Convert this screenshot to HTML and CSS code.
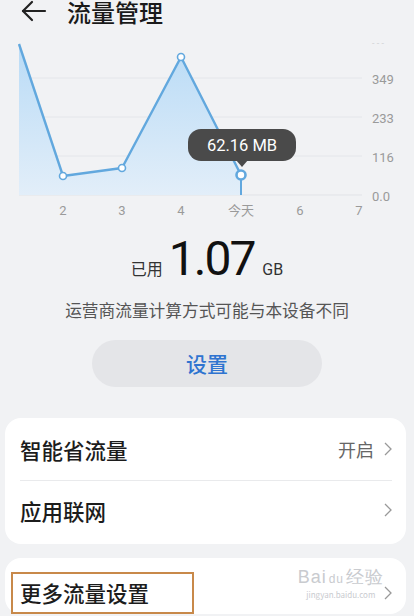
FILE: index.html
```html
<!DOCTYPE html>
<html>
<head>
    <meta charset="utf-8">
    <title>流量管理</title>
    <link rel="stylesheet" href="styles.css">
</head>
<body>
    <div class="page">
        <div class="header">
            <svg class="backIcon" width="26" height="22" viewBox="0 0 26 22">
                <polyline points="11,2 2,11 11,20" fill="none" stroke="#222" stroke-width="2.2" stroke-linecap="round" stroke-linejoin="round"/>
                <line x1="2" y1="11" x2="24" y2="11" stroke="#222" stroke-width="2.2" stroke-linecap="round"/>
            </svg>
            <span class="title">流量管理</span>
        </div>

        <svg class="chart" width="414" height="190" viewBox="0 0 414 190">
            <defs>
                <linearGradient id="fillGrad" x1="0" y1="0" x2="0" y2="1">
                    <stop offset="0" stop-color="#b9dbf6"/>
                    <stop offset="1" stop-color="#e2eef9"/>
                </linearGradient>
            </defs>
            <line x1="19" y1="48" x2="362" y2="48" stroke="#e4e6ea" stroke-width="1"/>
            <line x1="19" y1="87" x2="362" y2="87" stroke="#e4e6ea" stroke-width="1"/>
            <line x1="19" y1="126" x2="362" y2="126" stroke="#e4e6ea" stroke-width="1"/>
            <line x1="19" y1="165" x2="362" y2="165" stroke="#e1e3e7" stroke-width="1"/>
            <polygon points="19,14 63,146 122,138 181,27 241,145 241,165 19,165" fill="url(#fillGrad)"/>
            <polyline points="19,14 63,146 122,138 181,27 241,145" fill="none" stroke="#62a8de" stroke-width="2.4" stroke-linejoin="round"/>
            <line x1="241" y1="145" x2="241" y2="165" stroke="#62a8de" stroke-width="2"/>
            <circle cx="63" cy="146" r="3.5" fill="#fff" stroke="#62a8de" stroke-width="1.6"/>
            <circle cx="122" cy="138" r="3.5" fill="#fff" stroke="#62a8de" stroke-width="1.6"/>
            <circle cx="181" cy="27" r="3.5" fill="#fff" stroke="#62a8de" stroke-width="1.6"/>
            <circle cx="241" cy="145" r="4.5" fill="#fff" stroke="#62a8de" stroke-width="2.6"/>

            <g class="axisY">
                <text x="372" y="16" class="faint">- - -</text>
                <text x="372" y="54">349</text>
                <text x="372" y="93">233</text>
                <text x="372" y="132">116</text>
                <text x="372" y="171">0.0</text>
            </g>
            <g class="axisX">
                <text x="63" y="185">2</text>
                <text x="122" y="185">3</text>
                <text x="181" y="185">4</text>
                <text x="241" y="185">今天</text>
                <text x="300" y="185">6</text>
                <text x="359" y="185">7</text>
            </g>

            <rect x="188" y="99" width="108" height="32" rx="13" fill="#4a4a4a"/>
            <polygon points="236,130 248,130 242,137" fill="#4a4a4a"/>
            <text x="242" y="121" class="tipText">62.16 MB</text>
        </svg>

        <div class="usage">
            <span class="usageLabel">已用</span>
            <span class="usageValue">1.07</span>
            <span class="usageUnit">GB</span>
        </div>
        <div class="note">运营商流量计算方式可能与本设备不同</div>
        <div class="setBtn">设置</div>

        <div class="card">
            <div class="row">
                <span class="rowTitle">智能省流量</span>
                <span class="rowRight">
                    <span class="rowValue">开启</span>
                    <svg class="chevron" width="8" height="14" viewBox="0 0 8 14"><polyline points="1,1 7,7 1,13" fill="none" stroke="#999" stroke-width="1.3"/></svg>
                </span>
            </div>
            <div class="divider"></div>
            <div class="row rowLast">
                <span class="rowTitle">应用联网</span>
                <span class="rowRight">
                    <svg class="chevron" width="8" height="14" viewBox="0 0 8 14"><polyline points="1,1 7,7 1,13" fill="none" stroke="#999" stroke-width="1.3"/></svg>
                </span>
            </div>
        </div>

        <div class="card cardLast">
            <div class="row">
                <span class="rowTitle marked">更多流量设置</span>
                <span class="rowRight">
                    <svg class="chevron" width="8" height="14" viewBox="0 0 8 14"><polyline points="1,1 7,7 1,13" fill="none" stroke="#999" stroke-width="1.3"/></svg>
                </span>
            </div>
            <div class="watermark">
                <div class="wmMain">Bai<span class="wmPaw">du</span>经验</div>
                <div class="wmSub">jingyan.baidu.com</div>
            </div>
        </div>
    </div>
</body>
</html>
```

FILE: styles.css
```css
body {
    margin: 0;
    background: #f1f2f4;
    font-family: "Noto Sans CJK SC", "Noto Sans", sans-serif;
    color: #1f1f1f;
}

.page {
    width: 414px;
    height: 616px;
    overflow: hidden;
}

.header {
    display: flex;
    align-items: flex-start;
    height: 24px;
    padding-left: 21px;
}

.backIcon {
    display: block;
}

.title {
    margin-left: 20px;
    font-size: 24px;
    font-weight: 500;
    line-height: 24px;
    color: #1a1a1a;
}

.chart {
    display: block;
    margin-top: 6px;
}

.axisY text {
    font-family: "Roboto", "Noto Sans", sans-serif;
    font-size: 13px;
    fill: #9a9a9a;
}

.axisY .faint {
    fill: #d0d2d5;
    font-size: 9px;
}

.axisX text {
    font-family: "Roboto", "Noto Sans CJK SC", sans-serif;
    font-size: 13px;
    fill: #9a9a9a;
    text-anchor: middle;
}

.tipText {
    font-family: "Roboto", "Noto Sans", sans-serif;
    font-size: 16.5px;
    fill: #fff;
    text-anchor: middle;
}

.usage {
    display: flex;
    justify-content: center;
    align-items: baseline;
    margin-top: 14px;
    height: 50px;
}

.usageLabel {
    font-size: 16px;
    color: #333;
}

.usageValue {
    margin: 0 8px 0 6px;
    font-family: "Roboto", "Noto Sans", sans-serif;
    font-size: 48px;
    letter-spacing: -2px;
    line-height: 50px;
    color: #111;
}

.usageUnit {
    font-family: "Roboto", "Noto Sans", sans-serif;
    font-size: 16px;
    color: #333;
}

.note {
    margin-top: 16px;
    text-align: center;
    font-size: 16.7px;
    color: #555;
    line-height: 20px;
}

.setBtn {
    width: 230px;
    height: 47px;
    margin: 20px auto 0;
    border-radius: 24px;
    background: #e4e5e8;
    color: #2f74d0;
    font-size: 21px;
    font-weight: 500;
    line-height: 47px;
    text-align: center;
}

.card {
    position: relative;
    margin: 31px 8px 0 5px;
    padding: 0 14px 0 15px;
    background: #fff;
    border-radius: 16px;
}

.cardLast {
    margin-top: 14px;
    padding-top: 14px;
}

.row {
    display: flex;
    align-items: center;
    justify-content: space-between;
    height: 62px;
}

.rowLast {
    height: 58px;
    padding-bottom: 5px;
}

.rowTitle {
    font-size: 21.5px;
    font-weight: 500;
    color: #1c1c1c;
}

.rowRight {
    display: flex;
    align-items: center;
    gap: 10px;
}

.rowValue {
    font-size: 18px;
    color: #666;
}

.chevron {
    display: block;
}

.divider {
    height: 1px;
    background: #e9eaec;
}

.cardLast .row {
    height: 42px;
}

.marked {
    margin-left: -9px;
    padding: 0 43px 0 7px;
    height: 38px;
    line-height: 38px;
    border: 2px solid #c8894a;
}

.watermark {
    position: absolute;
    right: 22px;
    top: 8px;
    color: #c9cbcf;
    text-align: center;
}

.wmMain {
    font-family: "Liberation Sans", sans-serif;
    font-size: 18px;
    line-height: 22px;
    letter-spacing: 1px;
}

.wmPaw {
    font-size: 12px;
    margin: 0 2px;
}

.wmSub {
    font-size: 8px;
    line-height: 10px;
}
```
